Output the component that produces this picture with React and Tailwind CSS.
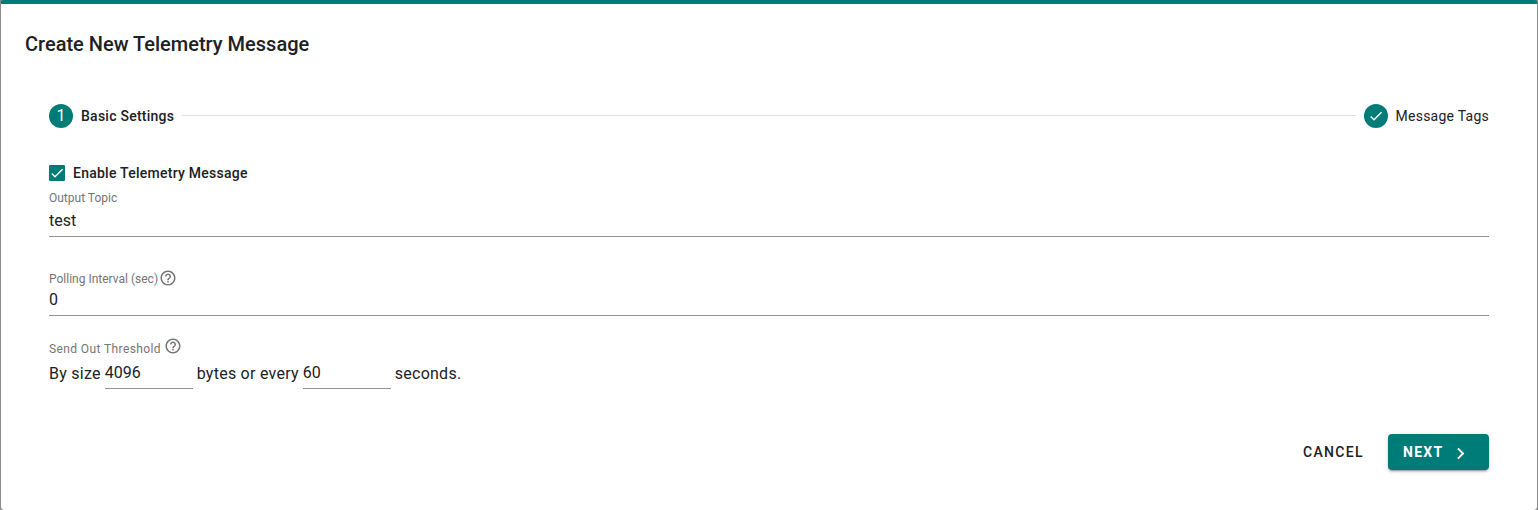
import React from "react";

function HelpIcon({ className }) {
  return (
    <svg viewBox="0 0 24 24" fill="currentColor" className={`size-[18px] shrink-0 ${className}`}>
      <path d="M11 18h2v-2h-2v2zm1-16C6.48 2 2 6.48 2 12s4.48 10 10 10 10-4.48 10-10S17.52 2 12 2zm0 18c-4.41 0-8-3.59-8-8s3.59-8 8-8 8 3.59 8 8-3.59 8-8 8zm0-14c-2.21 0-4 1.79-4 4h2c0-1.1.9-2 2-2s2 .9 2 2c0 2-3 1.75-3 5h2c0-2.25 3-2.5 3-5 0-2.21-1.79-4-4-4z" />
    </svg>
  );
}

function Stepper() {
  return (
    <div className="mt-11 flex h-6 items-center">
      <span className="flex size-6 items-center justify-center rounded-full bg-[#007c78] text-base leading-6 text-white">1</span>
      <span className="ml-2 text-sm font-medium tracking-[0.25px]">Basic Settings</span>
      <span className="mx-2 -mt-px h-px flex-1 bg-[#e0e0e0]" />
      <span className="flex size-6 items-center justify-center rounded-full bg-[#007c78] text-white">
        <svg viewBox="0 0 24 24" fill="currentColor" className="size-4">
          <path d="M9 16.17L4.83 12l-1.42 1.41L9 19 21 7l-1.41-1.41z" />
        </svg>
      </span>
      <span className="ml-2 text-sm tracking-[0.25px]">Message Tags</span>
    </div>
  );
}

export default function App() {
  return (
    <div className="h-[510px] w-full bg-[#8c8c8c] font-['Roboto',sans-serif] text-[#202124]">
      <div className="flex h-full flex-col overflow-hidden rounded border-x border-x-[#8c8c8c] border-t-4 border-t-[#007c78] bg-white px-12">
        <h1 className="-ml-6 mt-6 h-8 text-xl font-medium leading-8">Create New Telemetry Message</h1>
        <Stepper />
        <label className="mt-[33px] flex h-6 items-center">
          <span className="flex size-4 items-center justify-center rounded-[1px] bg-[#007c78]">
            <svg viewBox="0 0 24 24" fill="none" stroke="white" strokeWidth="2.1" className="size-4">
              <path d="M4.1 12.7 9 17.6 20.3 6.3" />
            </svg>
          </span>
          <span className="ml-2 text-sm font-medium tracking-[0.25px]">Enable Telemetry Message</span>
        </label>
        <div className="mt-[5px] h-[47px] border-b border-[#949494]">
          <div className="h-4 text-xs leading-4 text-[#757575]">Output Topic</div>
          <div className="mt-[3px] text-base leading-6">test</div>
        </div>
        <div className="mt-8 h-[47px] border-b border-[#949494]">
          <div className="flex h-[18px] items-center text-xs text-[#757575]">
            <span className="mt-px">Polling Interval (sec)</span>
            <HelpIcon className="ml-px" />
          </div>
          <div className="mt-px text-base leading-6">0</div>
        </div>
        <div className="mt-[21px] flex h-[18px] text-xs text-[#757575]">
          <span className="leading-6 tracking-[0.4px]">Send Out Threshold</span>
          <HelpIcon className="ml-[3px]" />
        </div>
        <div className="mt-1.5 flex h-7 text-base leading-6 tracking-[0.25px]">
          <span className="mt-px">By size</span>
          <span className="ml-1 h-7 w-[88px] border-b border-[#949494] tracking-normal">4096</span>
          <span className="ml-1 mt-px">bytes or every</span>
          <span className="ml-1 h-7 w-[88px] border-b border-[#949494] tracking-normal">60</span>
          <span className="ml-1 mt-px">seconds.</span>
        </div>
        <div className="mt-[45px] flex h-9 items-center justify-end text-sm font-medium tracking-[1.25px]">
          <button className="mr-6 tracking-[1.35px]">CANCEL</button>
          <button className="flex h-9 w-[101px] items-center rounded bg-[#007c78] pl-[15px] font-bold text-white shadow-[0_3px_1px_-2px_rgba(0,0,0,0.2),0_2px_2px_0_rgba(0,0,0,0.14),0_1px_5px_0_rgba(0,0,0,0.12)]">
            NEXT
            <svg viewBox="0 0 24 24" fill="currentColor" className="ml-1.5 mt-0.5 size-[23px]">
              <path d="M10 6L8.59 7.41 13.17 12l-4.58 4.59L10 18l6-6z" />
            </svg>
          </button>
        </div>
      </div>
    </div>
  );
}
